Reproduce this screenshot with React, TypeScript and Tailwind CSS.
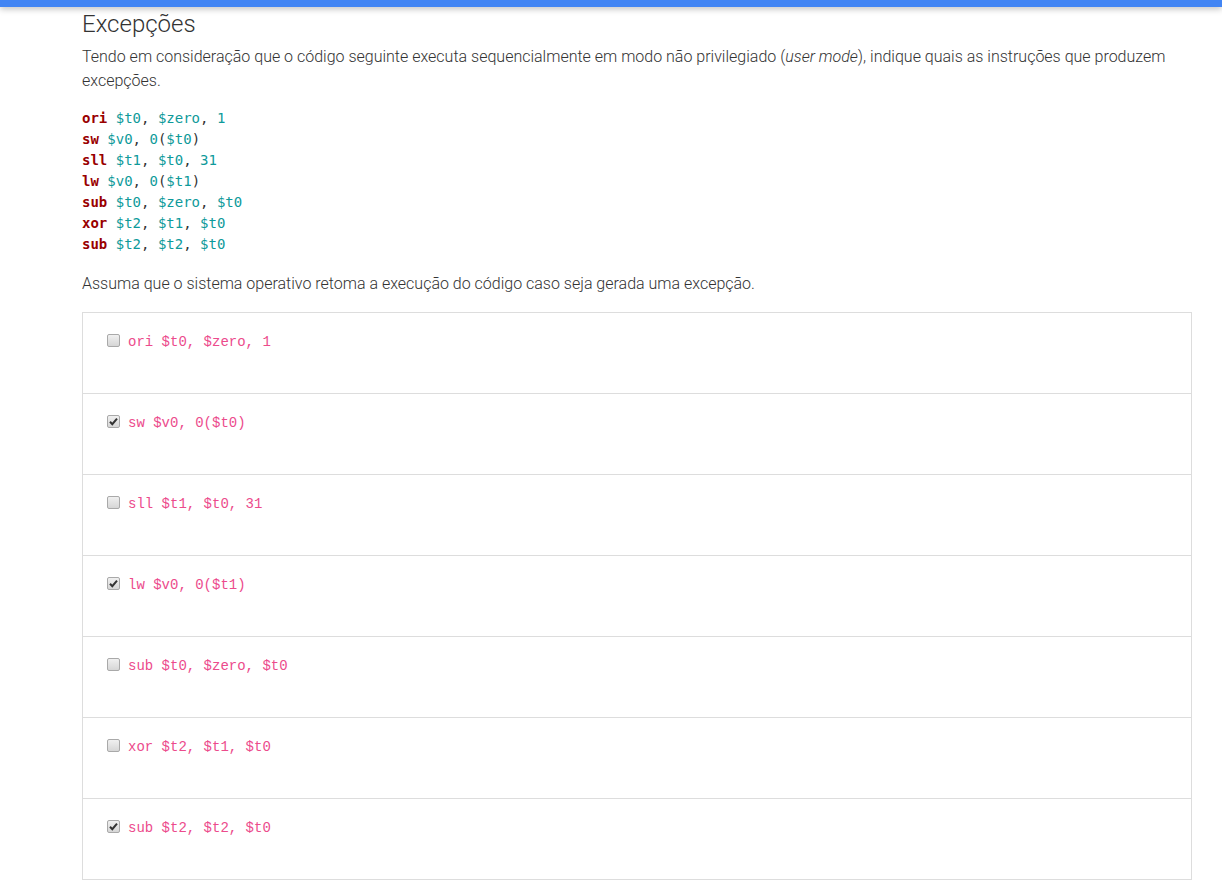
import React from "react";

type Tok = { t: string; k?: "kw" | "reg" | "num" | "p" };

const code: Tok[][] = [
  [{ t: "ori", k: "kw" }, { t: " " }, { t: "$t0", k: "reg" }, { t: ", " }, { t: "$zero", k: "reg" }, { t: ", " }, { t: "1", k: "num" }],
  [{ t: "sw", k: "kw" }, { t: " " }, { t: "$v0", k: "reg" }, { t: ", " }, { t: "0", k: "num" }, { t: "(" }, { t: "$t0", k: "reg" }, { t: ")" }],
  [{ t: "sll", k: "kw" }, { t: " " }, { t: "$t1", k: "reg" }, { t: ", " }, { t: "$t0", k: "reg" }, { t: ", " }, { t: "31", k: "num" }],
  [{ t: "lw", k: "kw" }, { t: " " }, { t: "$v0", k: "reg" }, { t: ", " }, { t: "0", k: "num" }, { t: "(" }, { t: "$t1", k: "reg" }, { t: ")" }],
  [{ t: "sub", k: "kw" }, { t: " " }, { t: "$t0", k: "reg" }, { t: ", " }, { t: "$zero", k: "reg" }, { t: ", " }, { t: "$t0", k: "reg" }],
  [{ t: "xor", k: "kw" }, { t: " " }, { t: "$t2", k: "reg" }, { t: ", " }, { t: "$t1", k: "reg" }, { t: ", " }, { t: "$t0", k: "reg" }],
  [{ t: "sub", k: "kw" }, { t: " " }, { t: "$t2", k: "reg" }, { t: ", " }, { t: "$t2", k: "reg" }, { t: ", " }, { t: "$t0", k: "reg" }],
];

const options = [
  { label: "ori $t0, $zero, 1", checked: false },
  { label: "sw $v0, 0($t0)", checked: true },
  { label: "sll $t1, $t0, 31", checked: false },
  { label: "lw $v0, 0($t1)", checked: true },
  { label: "sub $t0, $zero, $t0", checked: false },
  { label: "xor $t2, $t1, $t0", checked: false },
  { label: "sub $t2, $t2, $t0", checked: true },
];

function tokClass(k?: Tok["k"]) {
  if (k === "kw") return "font-bold text-[#990000]";
  if (k === "reg" || k === "num") return "text-[#0e9a9a]";
  return "text-[#333333]";
}

function Box({ checked }: { checked: boolean }) {
  return (
    <span className="mt-[1px] flex h-[13px] w-[13px] shrink-0 items-center justify-center rounded-[2px] border border-[#a9a9a9] bg-gradient-to-b from-[#f0f0f0] to-[#d6d6d6]">
      {checked && (
        <svg width="9" height="9" viewBox="0 0 9 9">
          <path d="M1 4.8 L3.3 7.2 L8 1.6" fill="none" stroke="#333" strokeWidth="2" />
        </svg>
      )}
    </span>
  );
}

export default function App() {
  return (
    <div className="min-h-screen bg-white font-['Roboto',sans-serif] text-[#333333]">
      {/* Top bar */}
      <div className="h-[7px] bg-[#4285f4] shadow-[0_2px_6px_rgba(0,0,0,0.25)]" />

      <div className="ml-[82px] w-[1110px]">
        <h2 className="mt-[2px] text-[24px] font-light leading-[30px]">Excepções</h2>

        <p className="mt-[6px] text-[16px] font-light leading-[24px]">
          Tendo em consideração que o código seguinte executa sequencialmente em modo não privilegiado (
          <em>user mode</em>), indique quais as instruções que produzem excepções.
        </p>

        <pre className="mt-[15px] font-['DejaVu_Sans_Mono',monospace] text-[14px] leading-[21px]">
          {code.map((line, i) => (
            <div key={i}>
              {line.map((tok, j) => (
                <span key={j} className={tokClass(tok.k)}>
                  {tok.t}
                </span>
              ))}
            </div>
          ))}
        </pre>

        <p className="mt-[17px] text-[16px] font-light leading-[24px]">
          Assuma que o sistema operativo retoma a execução do código caso seja gerada uma excepção.
        </p>

        <ul className="mt-[16px] border border-[#dddddd] border-b-0">
          {options.map((o, i) => (
            <li key={i} className="h-[81px] border-b border-[#dddddd] pl-[24px] pt-[20px]">
              <label className="flex items-start gap-[8px]">
                <Box checked={o.checked} />
                <span className="font-['Liberation_Mono',monospace] text-[14px] leading-[18px] text-[#ec4b8c]">
                  {o.label}
                </span>
              </label>
            </li>
          ))}
        </ul>
      </div>
    </div>
  );
}
